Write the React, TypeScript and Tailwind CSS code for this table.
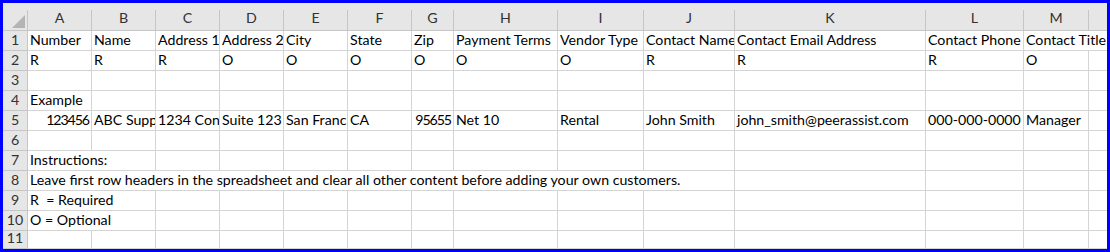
import React from 'react';

type Cell = { text?: string; w: string; right?: boolean; last?: boolean };

const W = {
  A: 'w-[64px]',
  B: 'w-[64px]',
  C: 'w-[64px]',
  D: 'w-[64px]',
  E: 'w-[64px]',
  F: 'w-[64px]',
  G: 'w-[42px]',
  H: 'w-[104px]',
  I: 'w-[86px]',
  J: 'w-[91px]',
  K: 'w-[191px]',
  L: 'w-[98px]',
  M: 'w-[65px]',
  N: 'w-[18px]',
};

const letters: (keyof typeof W)[] = ['A', 'B', 'C', 'D', 'E', 'F', 'G', 'H', 'I', 'J', 'K', 'L', 'M', 'N'];

// a row of plain cells, one value per column
function plain(values: string[] = []): Cell[] {
  return letters.map((k, i) => ({ text: values[i], w: W[k], last: k === 'N' }));
}

const rows: Cell[][] = [
  [
    ...plain([
      'Number',
      'Name',
      'Address 1',
      'Address 2',
      'City',
      'State',
      'Zip',
      'Payment Terms',
      'Vendor Type',
      'Contact Name',
      'Contact Email Address',
      'Contact Phone',
    ]).slice(0, 12),
    { text: 'Contact Title', w: 'w-[83px]', last: true },
  ],
  plain(['R', 'R', 'R', 'O', 'O', 'O', 'O', 'O', 'O', 'R', 'R', 'R', 'O']),
  plain(),
  plain(['Example']),
  [
    { text: '123456', w: W.A, right: true },
    ...plain([
      '',
      'ABC Supply',
      '1234 Construction Way',
      'Suite 123',
      'San Francisco',
      'CA',
    ]).slice(1, 6),
    { text: '95655', w: W.G, right: true },
    ...plain([
      '', '', '', '', '', '', '',
      'Net 10',
      'Rental',
      'John Smith',
      'john_smith@peerassist.com',
      '000-000-0000',
      'Manager',
    ]).slice(7),
  ],
  plain(),
  [{ text: 'Instructions:', w: 'w-[128px]' }, ...plain().slice(2)],
  [
    {
      text: 'Leave first row headers in the spreadsheet and clear all other content before adding your own customers.',
      w: 'w-[707px]',
    },
    ...plain().slice(10),
  ],
  [{ text: 'R  = Required', w: 'w-[128px]' }, ...plain().slice(2)],
  [{ text: 'O = Optional', w: 'w-[128px]' }, ...plain().slice(2)],
  plain(),
];

function HeaderRow() {
  return (
    <div className="flex h-[28px] bg-[#e6e6e6] border-b border-[#c6c6c6]">
      <div className="w-[25px] shrink-0 flex">
        <div className="flex-1 flex items-end justify-end pb-[2px] pr-[2px]">
          <svg width="13" height="13" viewBox="0 0 13 13">
            <polygon points="0,13 13,13 13,0" fill="#b4b4b4" />
          </svg>
        </div>
        <div className="w-px mt-[7px] bg-[#c6c6c6]" />
      </div>
      {letters.map((k) => (
        <div key={k} className={`${W[k]} shrink-0 flex`}>
          <div className="flex-1 flex items-center justify-center pt-[3px] text-[#333]">
            {k === 'N' ? '' : k}
          </div>
          {k !== 'N' && <div className="w-px mt-[7px] bg-[#c6c6c6]" />}
        </div>
      ))}
    </div>
  );
}

function Row({ n, cells }: { n: number; cells: Cell[] }) {
  const h = n === 11 ? 'h-[18px]' : 'h-[20px]';
  return (
    <div className={`flex ${h}`}>
      <div className="w-[25px] shrink-0 bg-[#e6e6e6] border-r border-b border-[#c6c6c6] flex items-end justify-center pb-[1px] text-[#333] leading-[18px]">
        {n}
      </div>
      {cells.map((c, i) => (
        <div
          key={i}
          className={`${c.w} shrink-0 border-b border-[#d4d4d4] ${c.last ? '' : 'border-r'} flex items-end ${
            c.right ? 'justify-end pr-[2px] tracking-[-1.1px]' : 'pl-[2px]'
          } pb-[1px] leading-[18px] whitespace-pre overflow-hidden text-black`}
        >
          {c.text}
        </div>
      ))}
    </div>
  );
}

export default function App() {
  return (
    <div className="w-[1110px] h-[252px] border-[3px] border-[#0000ff] bg-white overflow-hidden font-['Lato',sans-serif] text-[14.2px]">
      <HeaderRow />
      {rows.map((cells, i) => (
        <Row key={i} n={i + 1} cells={cells} />
      ))}
    </div>
  );
}
